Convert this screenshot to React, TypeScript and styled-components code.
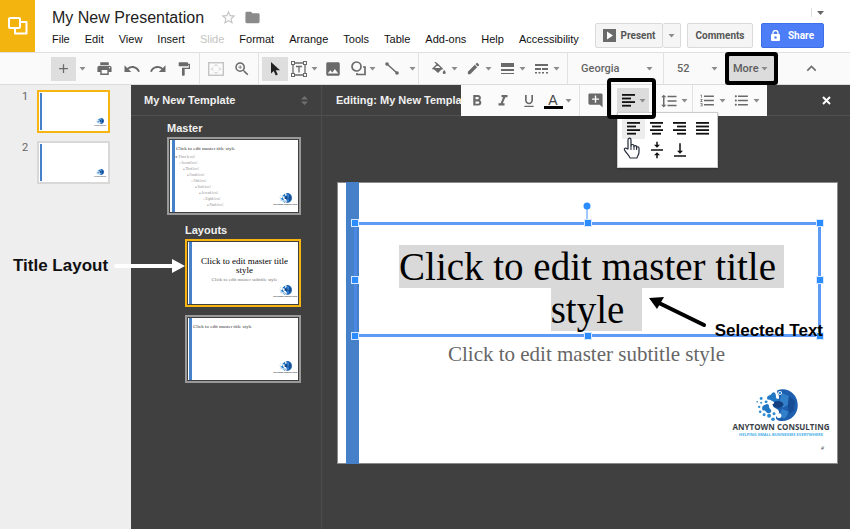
import React from "react";
import styled, { createGlobalStyle, css } from "styled-components";
import {
  MdPrint, MdUndo, MdRedo, MdFormatPaint, MdZoomIn, MdImage, MdEdit, MdAdd,
  MdFormatLineSpacing, MdFormatListNumbered, MdFormatListBulleted, MdAddComment,
  MdFolder, MdStarBorder, MdFormatBold, MdFormatItalic, MdFormatUnderlined,
  MdVerticalAlignBottom, MdVerticalAlignCenter, MdExpandLess,
} from "react-icons/md";

const sans = `"Liberation Sans", Arial, sans-serif`;
const ui = `Roboto, Arial, sans-serif`;
const serif = `Georgia, "Liberation Serif", serif`;

const GlobalStyle = createGlobalStyle`
  *, *::before, *::after { box-sizing: border-box; }
  body { margin: 0; background: #404040; font-family: ${ui}; color: #222; }
  button, select { font: inherit; color: inherit; margin: 0; padding: 0; border: 0; background: none; }
  svg { display: block; flex: none; }
`;

const Page = styled.div`
  position: relative;
  min-height: 100vh;
  display: flex;
  flex-direction: column;
  overflow: hidden;
`;

/* Header */
const Header = styled.header`
  display: flex;
  height: 52px;
  background: #fff;
`;
const Logo = styled.a`
  flex: none;
  width: 35px;
  display: flex;
  align-items: center;
  justify-content: center;
  background: #f4b40f;
`;
const Heading = styled.div`
  padding: 7px 0 0 17px;
`;
const TitleRow = styled.div`
  display: flex;
  align-items: center;
  height: 21px;
  color: #8a8a8a;
`;
const DocTitle = styled.h1`
  margin: 0 16px 0 0;
  font: 400 16px/20px ${sans};
  color: #222;
  white-space: nowrap;
`;
const IconButton = styled.button`
  width: 17px;
  display: flex;
  justify-content: center;
`;
const TitleActions = styled.div`
  display: flex;
  gap: 7px;
`;
const MenuBar = styled.nav`
  display: flex;
  gap: 15px;
  margin-top: 3px;
`;
const MenuItem = styled.button`
  font: 400 11px/16px ${sans};
  white-space: nowrap;
  color: #111;
  &:disabled { color: #c4c4c4; }
`;
const Account = styled.div`
  margin-left: auto;
  padding-right: 26px;
  display: flex;
  flex-direction: column;
  align-items: flex-end;
`;
const AccountMenu = styled.button`
  height: 9px;
  margin-top: 8px;
  width: 13px;
  border-left: 1px solid #ddd;
  display: flex;
  align-items: center;
  justify-content: flex-end;
  color: #666;
`;
const Actions = styled.div`
  display: flex;
  margin-top: 6px;
`;
const Action = styled.button<{ $primary?: boolean; $w: number; $left?: number; $joined?: boolean }>`
  width: ${(p) => p.$w}px;
  height: 25px;
  margin-left: ${(p) => p.$left ?? 0}px;
  display: flex;
  align-items: center;
  justify-content: center;
  gap: ${(p) => (p.$primary ? 8 : 5)}px;
  font-size: 10px;
  font-weight: 700;
  border-radius: 2px;
  color: ${(p) => (p.$primary ? "#fff" : "#555")};
  background: ${(p) => (p.$primary ? "#4d7ef8" : "#f5f5f5")};
  border: 1px solid ${(p) => (p.$primary ? "#3f6fe8" : "#dadada")};
  ${(p) => p.$joined && css`border-left: 0;`}
`;

/* Toolbar */
const Toolbar = styled.div`
  display: flex;
  align-items: stretch;
  height: 33px;
  background: #fafafa;
  border-top: 1px solid #e0e0e0;
  border-bottom: 1px solid #dcdcdc;
  color: #6a6a6a;
`;
const Group = styled.div<{ $l?: number; $r?: number; $gap?: number; $last?: boolean }>`
  flex: none;
  display: flex;
  align-items: center;
  gap: ${(p) => p.$gap ?? 0}px;
  padding: 0 ${(p) => p.$r ?? 3}px 0 ${(p) => p.$l ?? 3}px;
  border-right: ${(p) => (p.$last ? "0" : "1px solid #e2e2e2")};
`;
const Tool = styled.button<{ $active?: boolean; $w?: number }>`
  width: ${(p) => p.$w ?? 26}px;
  height: 24px;
  display: flex;
  align-items: center;
  justify-content: center;
  background: ${(p) => (p.$active ? "#dedede" : "transparent")};
  &:disabled { color: #c4c4c4; }
`;
const Split = styled.button<{ $icon?: number; $caret?: number }>`
  height: 24px;
  display: grid;
  grid-template-columns: ${(p) => p.$icon ?? 22}px ${(p) => p.$caret ?? 8}px;
  align-items: center;
  justify-items: center;
`;
const Picker = styled.label<{ $w: number }>`
  display: grid;
  grid-template-columns: 1fr 7px;
  align-items: center;
  width: ${(p) => p.$w}px;
  height: 24px;
  font-size: 11px;
  font-weight: 500;
  color: #666;
  select {
    grid-area: 1 / 1 / 2 / 3;
    appearance: none;
    width: 100%;
    outline: 0;
  }
  svg { grid-area: 1 / 2; pointer-events: none; }
`;
const MoreWrap = styled.div`
  position: relative;
  z-index: 5;
  flex: none;
  display: flex;
  align-items: center;
  margin-left: 11px;
`;
const MoreButton = styled.button`
  width: 45px;
  height: 25px;
  padding: 0 6px 0 4px;
  display: flex;
  align-items: center;
  justify-content: space-between;
  font-size: 11px;
  font-weight: 500;
  color: #5c5c5c;
  background: #dcdcdc;
  border-radius: 1px;
  box-shadow: 0 0 0 4px #000;
`;
const Collapse = styled(Tool)`
  align-self: center;
  margin: 0 26px 0 auto;
`;
const MorePanel = styled.div`
  position: absolute;
  z-index: -1;
  top: 32px;
  right: 7px;
  display: flex;
  height: 31px;
  background: #fbfbfb;
`;
const AlignWrap = styled.div`
  position: relative;
  padding: 0 9px 0 5px;
  align-self: center;
`;
const AlignButton = styled.button`
  width: 32px;
  height: 25px;
  padding: 0 2px;
  display: grid;
  grid-template-columns: 18px 10px;
  align-items: center;
  justify-items: center;
  background: #dcdcdc;
  color: #111;
`;
const AlignHighlight = styled.div`
  position: absolute;
  z-index: 2;
  inset: -10px 2px -6px -5px;
  border: 4px solid #000;
  border-radius: 4px;
  pointer-events: none;
`;
const AlignMenu = styled.div`
  position: absolute;
  top: 24px;
  left: 5px;
  width: 101px;
  padding: 4px 4px 6px;
  display: grid;
  grid-template-columns: repeat(4, 23px);
  background: #fff;
  border: 1px solid #ccc;
  box-shadow: 0 1px 2px rgba(0, 0, 0, 0.3);
`;
const AlignOption = styled.button<{ $active?: boolean }>`
  height: 22px;
  display: flex;
  align-items: center;
  justify-content: center;
  color: #111;
  background: ${(p) => (p.$active ? "#ededed" : "transparent")};
`;
const ColorLetter = styled.span`
  width: 19px;
  height: 17px;
  font: 400 14px/16px ${sans};
  text-align: center;
  color: #444;
  border-bottom: 3px solid #000;
`;

/* Workspace */
const Workspace = styled.div`
  flex: 1;
  display: grid;
  grid-template-columns: 131px 191px 1fr;
`;
const Filmstrip = styled.aside`
  padding: 5px 21px 0 22px;
  background: #eee;
`;
const FilmRow = styled.div`
  display: grid;
  grid-template-columns: 15px 1fr;
  margin-bottom: 8px;
  font-size: 11px;
  line-height: 13px;
  color: #666;
`;
const FilmThumb = styled.button<{ $active?: boolean }>`
  position: relative;
  height: 43px;
  background: #fff;
  border: ${(p) => (p.$active ? "2px solid #f7b512" : "2px solid #d8d8d8")};
`;
const TemplatePane = styled.section`
  color: #fff;
  background: #404040;
  border-right: 1px solid #4d4d4d;
`;
const PaneHeader = styled.div`
  height: 31px;
  padding: 0 13px;
  display: flex;
  align-items: center;
  justify-content: space-between;
  font: 700 11px/14px ${sans};
  color: #f0f0f0;
  white-space: nowrap;
  border-bottom: 1px solid #505050;
`;
const PaneList = styled.div`
  padding: 5px 20px 0 36px;
`;
const PaneLabel = styled.h2<{ $indent?: boolean }>`
  margin: 0 0 2px ${(p) => (p.$indent ? 18 : 0)}px;
  font: 700 11px/14px ${sans};
  color: #f0f0f0;
`;
const Thumb = styled.button<{ $active?: boolean; $indent?: boolean; $h: number }>`
  display: block;
  position: relative;
  width: ${(p) => (p.$indent ? "calc(100% - 18px)" : "100%")};
  margin: 0 0 8px ${(p) => (p.$indent ? 18 : 0)}px;
  height: ${(p) => p.$h}px;
  padding: 1px;
  border: 2px solid ${(p) => (p.$active ? "#f7b512" : "#999")};
  background: #fff content-box;
  font-family: ${serif};
  color: #333;
`;
const Bar = styled.span<{ $x: number; $w: number; $inset: number }>`
  position: absolute;
  top: ${(p) => p.$inset}px;
  bottom: ${(p) => p.$inset}px;
  left: ${(p) => p.$x}px;
  width: ${(p) => p.$w}px;
  background: #4580c8;
`;
const Brand = styled.span<{ $r: number; $b: number; $w: number }>`
  position: absolute;
  right: ${(p) => p.$r}px;
  bottom: ${(p) => p.$b}px;
  width: ${(p) => p.$w}px;
  display: flex;
  flex-direction: column;
  align-items: center;
  white-space: nowrap;
`;
const BrandMark = styled.span`
  padding-right: 9px;
`;
const BrandName = styled.span<{ $size: number }>`
  font: 700 ${(p) => p.$size}px/${(p) => p.$size + 2}px "Open Sans", sans-serif;
  color: #3a3f48;
`;
const Tagline = styled.span`
  font: 700 4px/5px "Open Sans", sans-serif;
  color: #4bb0e8;
`;
const ThumbTitle = styled.span`
  position: absolute;
  top: 7px;
  left: 6px;
  font-size: 5px;
  line-height: 6px;
  white-space: nowrap;
`;
const MasterTitle = styled(ThumbTitle)`
  left: 7px;
`;
const Outline = styled.span`
  position: absolute;
  top: 15px;
  left: 6px;
  display: flex;
  flex-direction: column;
  text-align: left;
  color: #888;
`;
const OutlineLine = styled.span<{ $level: number }>`
  padding-left: ${(p) => p.$level * 4}px;
  font-size: ${(p) => (p.$level ? 3 : 4)}px;
  line-height: 6px;
  white-space: nowrap;
`;
const CoverText = styled.span`
  position: absolute;
  inset: 16px 3px auto 6px;
  text-align: center;
  font-size: 9px;
  line-height: 9px;
  padding: 0 4px;
  color: #000;
`;
const CoverSubtitle = styled.span`
  display: block;
  margin-top: 2px;
  font-size: 5px;
  line-height: 6px;
  white-space: nowrap;
  color: #777;
`;

/* Editor */
const Editor = styled.main`
  min-width: 0;
  background: #404040;
`;
const EditorHeader = styled(PaneHeader)`
  padding: 0 15px 0 14px;
`;
const Slide = styled.div`
  position: relative;
  margin: 66px 12px 0 15px;
  aspect-ratio: 501 / 282;
  background: #fff;
  border: 1px solid #8a8a8a;
`;
const TitleBox = styled.div`
  position: absolute;
  top: 39px;
  left: 16px;
  right: 16px;
  height: 115px;
  padding: 20px 0 0;
  border: 3px solid #5f9bf5;
  border-left-color: #4a88e4;
  text-align: center;
  font: 400 39px/43px ${serif};
  color: #000;
  white-space: nowrap;
`;
const Line = styled.div`
  height: 43px;
`;
const Selected = styled.span<{ $tail: number }>`
  display: inline-block;
  height: 43px;
  background: #d9d9d9;
  padding-right: ${(p) => p.$tail}px;
  margin-right: -${(p) => p.$tail}px;
`;
const HandleFrame = styled.div`
  position: absolute;
  inset: -2px;
`;
const Handle = styled.i<{ $x: string; $y: string }>`
  position: absolute;
  left: ${(p) => p.$x};
  top: ${(p) => p.$y};
  width: 8px;
  height: 8px;
  margin: -4px;
  background: #2a8cff;
  border: 1px solid #d6e8ff;
`;
const Rotor = styled.svg`
  position: absolute;
  top: -23px;
  left: calc(50% - 5px);
`;
const Subtitle = styled.div`
  position: absolute;
  top: 159px;
  left: 16px;
  right: 18px;
  text-align: center;
  font: 400 21px/24px ${serif};
  color: #666;
`;
const PageNumber = styled.span`
  position: absolute;
  right: 13px;
  bottom: 11px;
  font: italic 400 6px/8px ${serif};
  color: #555;
`;

/* Callouts laid over the page */
const Callout = styled.div`
  position: absolute;
  z-index: 4;
  display: flex;
  font: 700 17px/20px ${sans};
  color: #000;
  white-space: nowrap;
`;
const LayoutCallout = styled(Callout)`
  top: 256px;
  left: 13px;
  align-items: center;
  gap: 6px;
  color: #111;
`;
const TextCallout = styled(Callout)`
  top: 114px;
  right: 14px;
  height: 44px;
  gap: 8px;
  span { align-self: flex-end; }
`;
const Pointer = styled.svg`
  position: absolute;
  top: 24px;
  left: 5px;
  z-index: 3;
`;

const Caret = () => (
  <svg width="7" height="4" viewBox="0 0 7 4" aria-hidden="true"><path d="M.5 0h6l-3 3.5z" fill="#8a8a8a" /></svg>
);

const lineSets: Record<string, [number, number][]> = {
  left: [[0, 13], [0, 9], [0, 13], [0, 9]],
  center: [[0, 13], [2, 9], [0, 13], [2, 9]],
  right: [[0, 13], [4, 9], [0, 13], [4, 9]],
  justify: [[0, 13], [0, 13], [0, 13], [0, 13]],
};
const AlignIcon = ({ kind }: { kind: keyof typeof lineSets }) => (
  <svg width="13" height="13" viewBox="0 0 13 13" fill="currentColor" aria-hidden="true">
    {lineSets[kind].map(([x, w], i) => <rect key={i} x={x} y={i * 3.6} width={w} height="1.8" />)}
  </svg>
);

const Globe = ({ size }: { size: number }) => (
  <svg width={size} height={size * 0.76} viewBox="0 0 43 33" aria-hidden="true">
    <path d="M23 1C34-2 43 6 43 16.500S34 34 24 32c-3-1-4-3-2-5s3-4 1-6-6-2-5-6 5-3 6-6-4-6-1-8z" fill="#1d5fae" />
    <path d="M27 4l7 3 1 8-7 4-4-5zM27 20l7 3-4 7-6-2z" fill="#3c8fd6" opacity=".7" />
    <path d="M34 7l6 5-1 10-5 3-1-10z" fill="#164d94" />
    <path d="M17 4c3-2 4 1 4 4s4 1 3 4-5 2-7 0-5 0-5-3 4-2 5-5zM10 16c3-2 4 0 4 2s3 3 2 5-4 2-5 0-4 0-4-3 1-3 3-4z" fill="#2177c4" />
    <ellipse cx="23" cy="15.500" rx="5.500" ry="3.500" fill="#143f80" />
    <g fill="#fff"><circle cx="25" cy="4" r="2" /><circle cx="24" cy="27" r="2.500" /><circle cx="17.500" cy="14" r="1.500" /></g>
    <g fill="#2a8bd2">
      <circle cx="25" cy="4" r="1.200" /><circle cx="6" cy="9.500" r="1.500" /><circle cx="11" cy="13" r="1.500" />
      <circle cx="6" cy="14" r="1" /><circle cx="2" cy="13" r=".8" /><circle cx="4" cy="18" r="1.200" />
      <circle cx="5" cy="23" r="1.300" /><circle cx="9" cy="26" r="1.500" /><circle cx="14" cy="27" r="2" />
      <circle cx="18" cy="30.500" r="1.800" /><circle cx="19" cy="25" r="1.500" />
    </g>
  </svg>
);

const ThumbBrand = ({ small }: { small?: boolean }) => (
  <Brand $r={small ? 2 : 3} $b={small ? 4 : 6} $w={small ? 12 : 22}>
    <Globe size={small ? 8 : 13} />
    <BrandName $size={small ? 1 : 2}>ANYTOWN CONSULTING</BrandName>
  </Brand>
);

const menus = ["File", "Edit", "View", "Insert", "Slide", "Format", "Arrange", "Tools", "Table", "Add-ons", "Help", "Accessibility"];
const levels = ["First level", "Second level", "Third level", "Fourth level", "Fifth level", "Sixth level", "Seventh level", "Eighth level", "Ninth level"];
const handles: [string, string][] = [
  ["0%", "0%"], ["50%", "0%"], ["100%", "0%"], ["0%", "50%"],
  ["100%", "50%"], ["0%", "100%"], ["50%", "100%"], ["100%", "100%"],
];

export default function App() {
  return (
    <Page>
      <GlobalStyle />
      <Header>
        <Logo href="#" aria-label="Slides home">
          <svg width="20" height="18" viewBox="0 0 20 18" fill="none" stroke="#fff" strokeWidth="2">
            <rect x="1" y="1" width="11" height="10" rx="1" />
            <path d="M13 5h5.500v11.500H7V11.500" strokeLinejoin="round" />
          </svg>
        </Logo>
        <Heading>
          <TitleRow>
            <DocTitle>My New Presentation</DocTitle>
            <TitleActions>
              <IconButton aria-label="Star"><MdStarBorder size={17} color="#c4c4c4" /></IconButton>
              <IconButton aria-label="Move to folder"><MdFolder size={17} /></IconButton>
            </TitleActions>
          </TitleRow>
          <MenuBar>
            {menus.map((m) => <MenuItem key={m} disabled={m === "Slide"}>{m}</MenuItem>)}
          </MenuBar>
        </Heading>
        <Account>
          <AccountMenu aria-label="Account"><svg width="8" height="4" viewBox="0 0 8 4"><path d="M1 0h7L4.500 4z" fill="currentColor" /></svg></AccountMenu>
          <Actions>
            <Action $w={68}>
              <svg width="13" height="13" viewBox="0 0 13 13"><rect width="13" height="13" fill="#6b6b6b" /><path d="M4 2.500v8l6-4z" fill="#fff" /></svg>
              Present
            </Action>
            <Action $w={18} $joined aria-label="Present options"><Caret /></Action>
            <Action $w={66} $left={6}>Comments</Action>
            <Action $w={63} $left={8} $primary>
              <svg width="9" height="11" viewBox="0 0 9 11"><rect y="4" width="9" height="7" rx="1" fill="#fff" /><path d="M2 4.500V3a2.500 2.500 0 015 0v1.500" fill="none" stroke="#fff" strokeWidth="1.300" /><circle cx="4.500" cy="7.500" r="1.200" fill="#4d7ef8" /></svg>
              Share
            </Action>
          </Actions>
        </Account>
      </Header>

      <Toolbar role="toolbar">
        <Group $l={51}>
          <Tool $w={25} $active aria-label="New slide"><MdAdd size={15} /></Tool>
          <Tool $w={13} aria-label="New slide options"><Caret /></Tool>
          <Tool $w={30} aria-label="Print"><MdPrint size={17} /></Tool>
          <Tool aria-label="Undo"><MdUndo size={18} /></Tool>
          <Tool aria-label="Redo"><MdRedo size={18} /></Tool>
          <Tool $w={25} aria-label="Paint format"><MdFormatPaint size={16} /></Tool>
        </Group>
        <Group>
          <Tool disabled aria-label="Zoom to fit">
            <svg width="16" height="14" viewBox="0 0 16 14" fill="none" stroke="currentColor" strokeWidth="1.400"><rect x=".7" y=".7" width="14.600" height="12.600" /><path d="M6.500 4L8 2.500 9.500 4M6.500 10L8 11.500 9.500 10M5 5.500L3.500 7 5 8.500M11 5.500L12.500 7 11 8.500" strokeWidth="1" /></svg>
          </Tool>
          <Tool aria-label="Zoom"><MdZoomIn size={18} /></Tool>
        </Group>
        <Group $r={2}>
          <Tool $active aria-label="Select">
            <svg width="9" height="14" viewBox="0 0 9 14"><path d="M0 0v11.500l2.700-2.600L4.800 13.500l2-1-2.100-4.300H9z" fill="#222" /></svg>
          </Tool>
          <Split aria-label="Text box">
            <svg width="16" height="16" viewBox="0 0 16 16" fill="none" stroke="currentColor" strokeWidth="1.300"><path d="M2 2h12v12H2zM5 5.500h6M8 5.500V11.500" /><g fill="#fafafa" strokeWidth="1"><rect x=".5" y=".5" width="3" height="3" /><rect x="12.500" y=".5" width="3" height="3" /><rect x=".5" y="12.500" width="3" height="3" /><rect x="12.500" y="12.500" width="3" height="3" /></g></svg>
            <Caret />
          </Split>
          <Tool $w={30} aria-label="Insert image"><MdImage size={18} /></Tool>
          <Split $icon={20} aria-label="Shape">
            <svg width="15" height="15" viewBox="0 0 15 15" fill="none" stroke="currentColor" strokeWidth="1.700"><circle cx="5.500" cy="5.500" r="4.500" /><path d="M12 6h2v7.500H6V12" /></svg>
            <Caret />
          </Split>
          <Split $icon={32} $caret={8} aria-label="Line">
            <svg width="14" height="13" viewBox="0 0 14 13"><path d="M2 2l10 9" stroke="currentColor" strokeWidth="1.500" /><circle cx="2" cy="2" r="1.800" fill="currentColor" /><circle cx="12" cy="11" r="1.800" fill="currentColor" /></svg>
            <Caret />
          </Split>
        </Group>
        <Group $l={9} $gap={4} $r={7}>
          <Split aria-label="Fill color">
            <svg width="14" height="13" viewBox="0 0 14 13"><path d="M3 0l2 2M1.200 6.500L5.500 2.200 10 6.600z" fill="none" stroke="currentColor" strokeWidth="1.300" /><path d="M1 6.500h9.500L6 11zM12.200 8s1.500 1.700 1.500 2.600a1.500 1.500 0 01-3 0c0-.9 1.500-2.600 1.500-2.600z" fill="currentColor" /></svg>
            <Caret />
          </Split>
          <Split aria-label="Line color"><MdEdit size={15} /><Caret /></Split>
          <Split aria-label="Line weight">
            <svg width="13" height="11" viewBox="0 0 13 11" fill="currentColor"><path d="M0 0h13v4H0zM0 6h13v2H0zM0 10h13v1H0z" /></svg>
            <Caret />
          </Split>
          <Split aria-label="Line dash">
            <svg width="13" height="10" viewBox="0 0 13 10" fill="currentColor"><path d="M0 0h13v2H0zM0 4h6v2H0zM7 4h6v2H7zM0 8h2v1.500H0zM3.500 8h2v1.500h-2zM7 8h2v1.500H7zM11 8h2v1.500h-2z" /></svg>
            <Caret />
          </Split>
        </Group>
        <Group $l={13} $r={10}>
          <Picker $w={72}>
            <select aria-label="Font" defaultValue="Georgia"><option>Georgia</option></select>
            <Caret />
          </Picker>
        </Group>
        <Group $l={13} $r={0} $last>
          <Picker $w={41}>
            <select aria-label="Font size" defaultValue="52"><option>52</option></select>
            <Caret />
          </Picker>
        </Group>
        <MoreWrap>
          <MoreButton aria-expanded="true">More <Caret /></MoreButton>
          <MorePanel>
            <Group $r={7}>
              <Tool aria-label="Bold"><MdFormatBold size={18} /></Tool>
              <Tool aria-label="Italic"><MdFormatItalic size={18} /></Tool>
              <Tool aria-label="Underline"><MdFormatUnderlined size={16} /></Tool>
              <Split aria-label="Text color"><ColorLetter>A</ColorLetter><Caret /></Split>
            </Group>
            <Group>
              <Tool $w={25} aria-label="Add comment"><MdAddComment size={17} /></Tool>
            </Group>
            <AlignWrap>
              <AlignButton aria-label="Align" aria-expanded="true"><AlignIcon kind="left" /><Caret /></AlignButton>
              <AlignMenu role="menu">
                <AlignOption $active aria-label="Left"><AlignIcon kind="left" /></AlignOption>
                <AlignOption aria-label="Center"><AlignIcon kind="center" /></AlignOption>
                <AlignOption aria-label="Right"><AlignIcon kind="right" /></AlignOption>
                <AlignOption aria-label="Justify"><AlignIcon kind="justify" /></AlignOption>
                <AlignOption aria-label="Top" />
                <AlignOption aria-label="Middle"><MdVerticalAlignCenter size={18} /></AlignOption>
                <AlignOption aria-label="Bottom"><MdVerticalAlignBottom size={18} /></AlignOption>
                <Pointer width="18" height="22" viewBox="0 0 18 22" aria-hidden="true">
                  <path d="M5 12V3c0-2.500 3-2.500 3 0v6c0-2 3-2 3 0v.8c0-1.700 2.600-1.700 2.600.2v.9c0-1.600 2.400-1.500 2.400.3V15c0 3-1.500 3.500-2 6H7c-.4-2-3.500-4.500-5.500-8-.8-1.800 1.200-2.600 2.200-1.400z" fill="#fff" stroke="#222836" strokeWidth="1.200" strokeLinejoin="round" />
                  <path d="M8 9v4M11 9.500V13M13.600 10.500V13" stroke="#222836" strokeWidth="1" />
                </Pointer>
              </AlignMenu>
              <AlignHighlight />
            </AlignWrap>
            <Group $l={0} $r={4}>
              <Split aria-label="Line spacing"><MdFormatLineSpacing size={18} /><Caret /></Split>
            </Group>
            <Group $l={3} $gap={4} $r={7} $last>
              <Split aria-label="Numbered list"><MdFormatListNumbered size={17} /><Caret /></Split>
              <Split aria-label="Bulleted list"><MdFormatListBulleted size={17} /><Caret /></Split>
            </Group>
          </MorePanel>
        </MoreWrap>
        <Collapse aria-label="Hide menus"><MdExpandLess size={19} /></Collapse>
      </Toolbar>

      <Workspace>
        <Filmstrip>
          {[1, 2].map((n) => (
            <FilmRow key={n}>
              <span>{n}</span>
              <FilmThumb $active={n === 1} aria-label={`Slide ${n}`}>
                <Bar $x={1} $w={2} $inset={1} />
                <ThumbBrand small />
              </FilmThumb>
            </FilmRow>
          ))}
        </Filmstrip>

        <TemplatePane>
          <PaneHeader>
            My New Template
            <svg width="7" height="9" viewBox="0 0 7 9" fill="#707070"><path d="M0 3.500L3.500 0 7 3.500zM0 5.500h7L3.500 9z" /></svg>
          </PaneHeader>
          <PaneList>
            <PaneLabel>Master</PaneLabel>
            <Thumb $h={78} aria-label="Master">
              <Bar $x={3} $w={3} $inset={1} />
              <MasterTitle>Click to edit master title style</MasterTitle>
              <Outline>
                {levels.map((l, i) => <OutlineLine key={l} $level={i}>{i % 3 === 1 ? "○" : "●"} {l}</OutlineLine>)}
              </Outline>
              <ThumbBrand />
            </Thumb>
            <PaneLabel $indent>Layouts</PaneLabel>
            <Thumb $h={68} $indent $active aria-label="Title layout">
              <Bar $x={2} $w={3} $inset={1} />
              <CoverText>
                Click to edit master title style
                <CoverSubtitle>Click to edit master subtitle style</CoverSubtitle>
              </CoverText>
              <ThumbBrand />
            </Thumb>
            <Thumb $h={68} $indent aria-label="Title only layout">
              <Bar $x={2} $w={3} $inset={1} />
              <ThumbTitle>Click to edit master title style</ThumbTitle>
              <ThumbBrand />
            </Thumb>
          </PaneList>
        </TemplatePane>

        <Editor>
          <EditorHeader>
            Editing: My New Template
            <IconButton aria-label="Close">
              <svg width="9" height="9" viewBox="0 0 9 9"><path d="M1 1l7 7M8 1L1 8" stroke="#fff" strokeWidth="2" /></svg>
            </IconButton>
          </EditorHeader>
          <Slide>
            <Bar $x={8} $w={13} $inset={-1} />
            <Brand $r={8} $b={26} $w={96}>
              <BrandMark><Globe size={43} /></BrandMark>
              <BrandName $size={8}>ANYTOWN CONSULTING</BrandName>
              <Tagline>HELPING SMALL BUSINESSES EVERYWHERE</Tagline>
            </Brand>
            <PageNumber>#</PageNumber>
            <TitleBox>
              <Line><Selected $tail={8}>Click to edit master title</Selected></Line>
              <Line><Selected $tail={18}>style</Selected></Line>
              <Rotor width="8" height="20" viewBox="0 0 8 20"><path d="M4 6v14" stroke="#7db4ff" strokeWidth="1.500" /><circle cx="4" cy="4" r="3.500" fill="#2a8cff" /></Rotor>
              <HandleFrame>
                {handles.map(([x, y]) => <Handle key={x + y} $x={x} $y={y} />)}
              </HandleFrame>
            </TitleBox>
            <Subtitle>Click to edit master subtitle style</Subtitle>
            <TextCallout>
              <svg width="58" height="32" viewBox="0 0 58 32"><path d="M10 6L55 28" stroke="#000" strokeWidth="4" strokeLinecap="round" /><path d="M0 1l15-1-7 12z" /></svg>
              <span>Selected Text</span>
            </TextCallout>
          </Slide>
        </Editor>
      </Workspace>

      <LayoutCallout>
        Title Layout
        <svg width="71" height="14" viewBox="0 0 71 14" fill="#fff"><path d="M2 5h56V0l13 7-13 7V9H2a2 2 0 010-4z" /></svg>
      </LayoutCallout>
    </Page>
  );
}
